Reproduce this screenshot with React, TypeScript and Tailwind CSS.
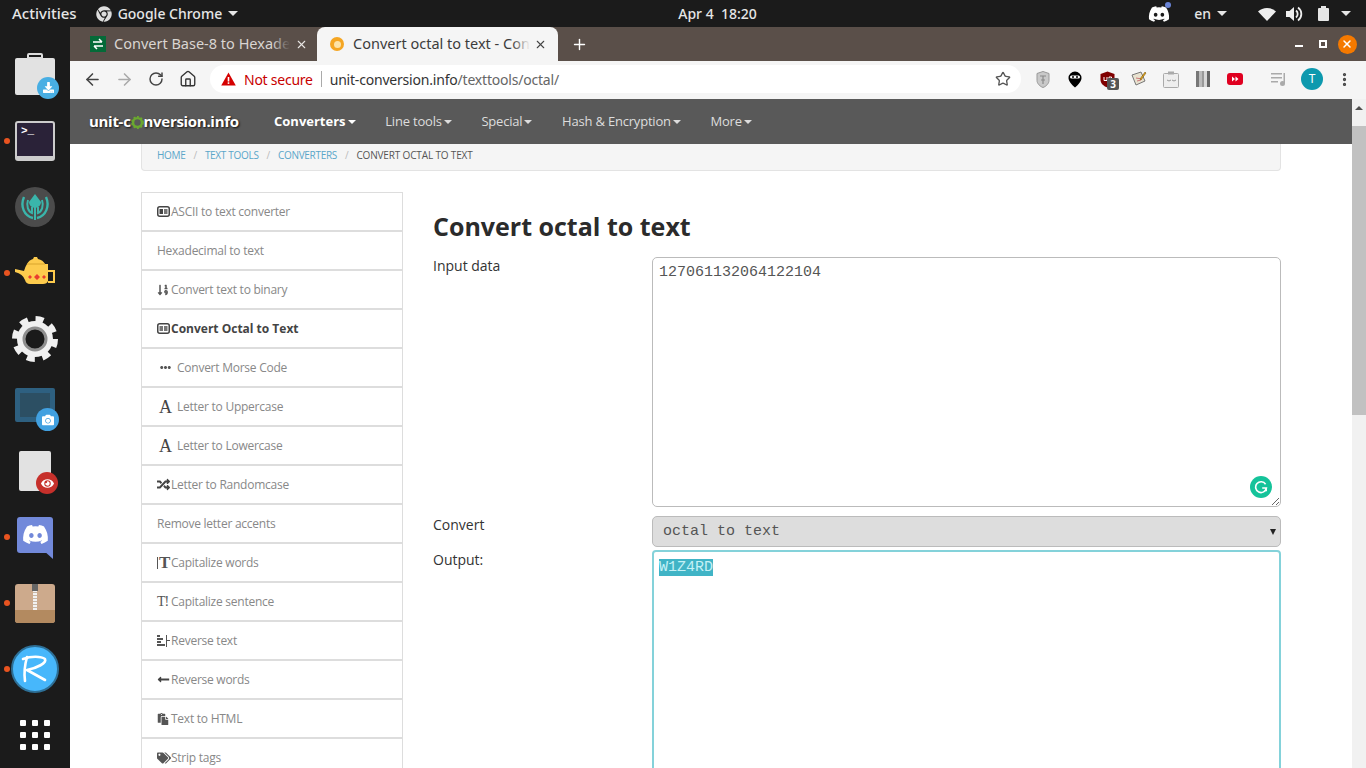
import type { ReactNode } from 'react';
import { ArrowLeft, ArrowRight, RotateCw, Home, Star, MoreVertical, Plus, X } from 'lucide-react';
import { FaChrome, FaDiscord, FaSortNumericDown, FaEllipsisH, FaRandom, FaLongArrowAltLeft, FaPaste, FaTags, FaDownload, FaCamera, FaEye } from 'react-icons/fa';

function CodeIcon({ label }: { label: string }) {
  return (
    <svg width="13" height="11" viewBox="0 0 13 11" className="shrink-0">
      <rect x="0.75" y="0.75" width="11.5" height="9.5" rx="2" fill="none" stroke="#444" strokeWidth="1.5" />
      <rect x="2.5" y="3" width="3.5" height="5" fill={label === 'a' ? '#444' : '#777'} />
      <rect x="7" y="3" width="3.5" height="5" fill="#777" />
    </svg>
  );
}

function SerifA() {
  return <span className="font-['Liberation_Serif',serif] text-[18px] leading-none text-[#444] ml-[2px]">A</span>;
}

function ReverseIcon() {
  return (
    <svg width="13" height="12" viewBox="0 0 13 12" className="shrink-0" fill="#555">
      <rect x="0" y="0" width="3" height="2" />
      <rect x="0" y="3" width="6" height="2" />
      <rect x="0" y="6" width="4" height="2" />
      <rect x="0" y="9" width="8" height="2" />
      <rect x="9" y="0" width="1" height="12" />
      <rect x="10" y="5" width="3" height="1" />
    </svg>
  );
}

const sideItems: { label: string; icon?: ReactNode; wide?: boolean; bold?: boolean }[] = [
  { label: 'ASCII to text converter', icon: <CodeIcon label="a" /> },
  { label: 'Hexadecimal to text' },
  { label: 'Convert text to binary', icon: <FaSortNumericDown size={12} color="#555" /> },
  { label: 'Convert Octal to Text', icon: <CodeIcon label="7" />, bold: true },
  { label: 'Convert Morse Code', icon: <FaEllipsisH size={11} color="#555" className="ml-[3px]" />, wide: true },
  { label: 'Letter to Uppercase', icon: <SerifA />, wide: true },
  { label: 'Letter to Lowercase', icon: <SerifA />, wide: true },
  { label: 'Letter to Randomcase', icon: <FaRandom size={13} color="#444" /> },
  { label: 'Remove letter accents' },
  {
    label: 'Capitalize words',
    icon: (
      <span className="flex items-center gap-[1px]">
        <span className="w-px h-[12px] bg-[#555]" />
        <span className="font-['Liberation_Serif',serif] text-[17px] leading-none font-bold text-[#555]">T</span>
      </span>
    ),
  },
  {
    label: 'Capitalize sentence',
    icon: <span className="font-['Liberation_Serif',serif] text-[14px] leading-none text-[#555] tracking-[-1px] whitespace-nowrap">T!</span>,
  },
  { label: 'Reverse text', icon: <ReverseIcon /> },
  { label: 'Reverse words', icon: <FaLongArrowAltLeft size={13} color="#444" /> },
  { label: 'Text to HTML', icon: <FaPaste size={12} color="#555" /> },
  { label: 'Strip tags', icon: <FaTags size={14} color="#555" /> },
];

function Sidebar() {
  return (
    <div className="w-[262px] shrink-0 flex flex-col">
      {sideItems.map((item) => (
        <div
          key={item.label}
          className={`h-[39px] shrink-0 border border-[#ddd] bg-white flex items-center pl-[15px] text-[12px] ${item.bold ? 'font-bold text-[#444]' : 'text-[#888] tracking-[-0.25px]'}`}
        >
          {item.icon && <span className={`flex items-center shrink-0 ${item.wide ? 'w-[20px]' : 'w-[14px]'}`}>{item.icon}</span>}
          <span>{item.label}</span>
        </div>
      ))}
    </div>
  );
}

function GearO() {
  return (
    <svg width="13" height="13" viewBox="0 0 13 13" className="inline-block align-[-2px]">
      <circle cx="6.5" cy="6.5" r="4.4" fill="none" stroke="#6aa82f" strokeWidth="2.4" />
      <circle cx="6.5" cy="6.5" r="5.6" fill="none" stroke="#6aa82f" strokeWidth="1.6" strokeDasharray="2 1.6" />
    </svg>
  );
}

function NavItem({ label, bold }: { label: string; bold?: boolean }) {
  return (
    <div className={`flex items-center pl-[15px] pr-[14.7px] text-[13px] ${bold ? 'font-bold text-white' : 'text-[#ddd] tracking-[-0.2px]'}`}>
      {label}
      <span className="ml-[2px] mt-[1px] border-x-[4px] border-t-[4px] border-x-transparent border-t-current" />
    </div>
  );
}

function Navbar() {
  return (
    <div className="h-[45px] shrink-0 bg-[#595959] flex items-center pl-[19px]">
      <div className="w-[170px] font-bold text-[15px] tracking-[-0.3px] text-white [text-shadow:1px_1px_2px_#111]">
        unit-c<GearO />nversion.info
      </div>
      <NavItem label="Converters" bold />
      <NavItem label="Line tools" />
      <NavItem label="Special" />
      <NavItem label="Hash & Encryption" />
      <NavItem label="More" />
    </div>
  );
}

function Breadcrumb() {
  return (
    <div className="h-[27px] pb-[4px] bg-[#f5f5f5] border border-t-0 border-[#e3e3e3] rounded-b-[4px] flex items-center pl-[15px] gap-[8px] text-[10px] tracking-[-0.3px]">
      <span className="text-[#5aa6c9]">HOME</span>
      <span className="text-[#bbb]">/</span>
      <span className="text-[#5aa6c9]">TEXT TOOLS</span>
      <span className="text-[#bbb]">/</span>
      <span className="text-[#5aa6c9]">CONVERTERS</span>
      <span className="text-[#bbb]">/</span>
      <span className="text-[#555] tracking-[-0.15px]">CONVERT OCTAL TO TEXT</span>
    </div>
  );
}

function GrammarlyBadge() {
  return (
    <div className="absolute right-[9px] bottom-[9px] w-[22px] h-[22px] rounded-full bg-[#15c39a] flex items-center justify-center">
      <svg width="14" height="14" viewBox="0 0 14 14" fill="none" stroke="#fff" strokeWidth="1.6">
        <path d="M11.6 4.2A5.4 5.4 0 1 0 12.4 8H8.2" />
        <path d="M12.2 8v3.2" />
      </svg>
    </div>
  );
}

function ConvertForm() {
  return (
    <div className="flex-1 min-w-0 pl-[30px]">
      <h1 className="h-[65px] pt-[16px] text-[25px] leading-[36px] font-bold text-[#2b2b2b]">Convert octal to text</h1>
      <div className="flex">
        <label className="w-[219px] shrink-0 text-[14px] leading-[18px] text-[#333]">Input data</label>
        <div className="flex-1 relative h-[250px]">
          <textarea
            readOnly
            defaultValue="127061132064122104"
            className="block w-full h-full border border-[#bbb] rounded-[5px] pl-[6px] pt-[6px] font-['Liberation_Mono',monospace] text-[15px] leading-[18px] text-[#555] outline-none resize-y"
          />
          <GrammarlyBadge />
        </div>
      </div>
      <div className="flex mt-[9px]">
        <label className="w-[219px] shrink-0 text-[14px] leading-[18px] text-[#333]">Convert</label>
        <div className="flex-1 relative">
          <select className="block w-full h-[31px] appearance-none border border-[#bbb] rounded-[5px] bg-[#ddd] pl-[10px] pt-[1px] font-['Liberation_Mono',monospace] text-[15px] text-[#555]">
            <option>octal to text</option>
          </select>
          <span className="absolute right-[5px] top-[13px] border-x-[3px] border-t-[6px] border-x-transparent border-t-[#222]" />
        </div>
      </div>
      <div className="flex mt-[3px]">
        <label className="w-[219px] shrink-0 text-[14px] leading-[18px] pt-px text-[#333]">Output:</label>
        <div className="flex-1 h-[250px] border-2 border-[#84d2da] rounded-[4px] pl-[5px] pt-[7px] font-['Liberation_Mono',monospace] text-[15px] leading-[18px] text-[#555]">
          <span className="bg-[#40b4c6] text-[#c4f1f6]">W1Z4RD</span>
        </div>
      </div>
    </div>
  );
}

function Scrollbar() {
  return (
    <div className="w-[14px] shrink-0 bg-[#f1f1f1] flex flex-col items-center">
      <div className="h-[17px] shrink-0 flex items-center justify-center">
        <span className="border-x-[4px] border-b-[4px] border-x-transparent border-b-[#505050]" />
      </div>
      <div className="w-full h-[289px] mt-[10px] bg-[#c1c1c1]" />
    </div>
  );
}

function Extensions() {
  return (
    <div className="flex items-center ml-[6px] shrink-0">
      <div className="w-[32px] flex justify-center">
        <svg width="14" height="17" viewBox="0 0 14 17"><path d="M1 2.5 7 .5l6 2v7c0 3-3 6-6 7-3-1-6-4-6-7z" fill="#c9c9c9" stroke="#999" /><path d="M4 5h6M5 9h4M7 5v8" stroke="#8a8a8a" strokeWidth="1.2" /></svg>
      </div>
      <div className="w-[32px] flex justify-center">
        <svg width="14" height="17" viewBox="0 0 14 17"><path d="M7 .5a6.5 6.5 0 0 1 6.5 6.5c0 3-3.5 7-6.5 9.5C4 14 .5 10 .5 7A6.5 6.5 0 0 1 7 .5z" fill="#000" /><rect x="2" y="4.5" width="10" height="3" rx="1.5" fill="#fff" /><circle cx="5" cy="6" r="1" /><circle cx="9" cy="6" r="1" /></svg>
      </div>
      <div className="w-[32px] flex justify-center relative">
        <svg width="15" height="17" viewBox="0 0 15 17"><path d="M7.5.5 14.5 3v6c0 3.500-3.500 6.500-7 7.500-3.500-1-7-4-7-7.500V3z" fill="#800000" /><path d="M4 6v3.500h3V6M9 9.500V6h2.500v3.500" stroke="#fff" fill="none" /></svg>
        <span className="absolute left-[16px] top-[7px] w-[12px] h-[12px] bg-[#555] rounded-[2px] text-white text-[10px] leading-[12px] font-bold text-center">3</span>
      </div>
      <div className="w-[32px] flex justify-center">
        <svg width="16" height="16" viewBox="0 0 16 16"><path d="M1 4 10 1l4 9-9 4z" fill="#e8e2d0" stroke="#777" /><path d="M5 7l6 1M6 10l4-1" stroke="#c77" /><path d="M9 8l5-7 1 1-5 7z" fill="#e2a21b" stroke="#6b4c00" strokeWidth=".5" /></svg>
      </div>
      <div className="w-[32px] flex justify-center">
        <svg width="16" height="17" viewBox="0 0 16 17"><rect x=".5" y="2.500" width="15" height="14" rx="1" fill="#eee" stroke="#aaa" /><rect x="5" y=".5" width="6" height="3" fill="#aaa" /><path d="M4 9l2 1 2-1M9 9l2 1 2-1" stroke="#999" fill="none" /></svg>
      </div>
      <div className="w-[32px] flex justify-center">
        <svg width="14" height="16" viewBox="0 0 14 16">
          <rect width="3" height="16" fill="#777" />
          <rect x="3" width="3" height="16" fill="#bbb" />
          <rect x="6" width="2" height="16" fill="#999" />
          <rect x="8" width="3" height="16" fill="#d8d8d8" />
          <rect x="11" width="3" height="16" fill="#666" />
        </svg>
      </div>
      <div className="w-[32px] flex justify-center">
        <svg width="16" height="12" viewBox="0 0 16 12"><rect width="16" height="12" rx="3" fill="#e00020" /><path d="M5 3.500 8 6 5 8.500zM8.500 3.500l3 2.500-3 2.500z" fill="#fff" /></svg>
      </div>
    </div>
  );
}

function ChromeFrame() {
  return (
    <div className="font-['Noto_Sans',sans-serif]">
      <div className="h-[34px] bg-[#5a4f49] flex items-end pl-[8px]">
        <div className="w-[239px] h-[34px] flex items-center pl-[12px] pr-[9px] text-[14.5px] text-[#d9d5d2]">
          <svg width="16" height="16" viewBox="0 0 16 16" className="shrink-0">
            <rect width="16" height="16" fill="#046a38" />
            <path d="M3 6h9M12 6 9 3M13 10H4M4 10l3 3" stroke="#fff" strokeWidth="1.5" fill="none" />
          </svg>
          <span className="relative ml-[8px] whitespace-nowrap">
            Convert Base-8 to Hexade
            <span className="absolute right-0 top-0 h-full w-[18px] bg-gradient-to-r from-transparent to-[#5a4f49]" />
          </span>
          <X size={13} className="ml-auto shrink-0" color="#e8e6e3" />
        </div>
        <div className="w-[241px] h-[34px] bg-[#f5f5f5] rounded-t-[8px] flex items-center pl-[13px] pr-[11px] text-[14.5px] text-[#3c3c3c]">
          <span className="w-[14px] h-[14px] rounded-full bg-[#f5a623] flex items-center justify-center shrink-0">
            <span className="w-[7px] h-[7px] rounded-full bg-[#fde3a7]" />
          </span>
          <span className="relative ml-[9px] whitespace-nowrap">
            Convert octal to text - Con
            <span className="absolute right-0 top-0 h-full w-[18px] bg-gradient-to-r from-transparent to-[#f5f5f5]" />
          </span>
          <X size={13} className="ml-auto shrink-0" color="#444" />
        </div>
        <div className="h-[34px] w-[42px] flex items-center justify-center">
          <Plus size={17} color="#fff" />
        </div>
        <div className="flex-1" />
        <div className="h-[34px] flex items-center">
          <div className="w-[24px] flex justify-center"><span className="w-[8px] h-[2px] mt-[4px] bg-white" /></div>
          <div className="w-[24px] flex justify-center"><span className="w-[8px] h-[8px] border-2 border-white" /></div>
          <div className="w-[24px] flex justify-center mr-[7px]">
            <span className="w-[19px] h-[19px] rounded-full bg-[#f57900] flex items-center justify-center"><X size={12} color="#fff" strokeWidth={3} /></span>
          </div>
        </div>
      </div>
      <div className="h-[38px] bg-[#f5f5f5] flex items-center pl-[6px] pb-[2px]">
        <div className="w-[32px] shrink-0 flex justify-center"><ArrowLeft size={19} color="#444" strokeWidth={2} /></div>
        <div className="w-[32px] shrink-0 flex justify-center"><ArrowRight size={19} color="#aaa" strokeWidth={2} /></div>
        <div className="w-[32px] shrink-0 flex justify-center"><RotateCw size={16} color="#444" strokeWidth={2.2} /></div>
        <div className="w-[32px] shrink-0 flex justify-center"><Home size={18} color="#333" strokeWidth={1.8} /></div>
        <div className="w-[811px] shrink-0 h-[28px] ml-[6px] bg-white rounded-full flex items-center pl-[11px] text-[14px]">
          <svg width="15" height="14" viewBox="0 0 15 14" className="shrink-0">
            <path d="M7.5 .5 14.800 13.500H.2z" fill="#d50000" />
            <rect x="6.700" y="5" width="1.600" height="4.500" fill="#fff" />
            <rect x="6.700" y="10.300" width="1.600" height="1.600" fill="#fff" />
          </svg>
          <span className="ml-[8px] text-[#c80000] tracking-[-0.25px]">Not secure</span>
          <span className="w-px h-[16px] bg-[#aaa] ml-[8px]" />
          <span className="ml-[8px] text-[#333] tracking-[-0.2px]">unit-conversion.info<span className="text-[#666]">/texttools/octal/</span></span>
          <Star size={16} color="#555" className="ml-auto mr-[10px]" />
        </div>
        <Extensions />
        <div className="w-[44px] shrink-0 ml-[6px] flex justify-center">
          <svg width="17" height="15" viewBox="0 0 17 15" fill="#aaa"><rect y="1" width="11" height="1.500" /><rect y="5" width="11" height="1.500" /><rect y="9" width="7" height="1.500" /><rect x="12.500" y="1" width="1.500" height="10" /><circle cx="11.500" cy="11.500" r="2.500" /></svg>
        </div>
        <div className="w-[22px] h-[22px] shrink-0 rounded-full bg-[#0d99ae] text-white text-[12px] flex items-center justify-center">T</div>
        <div className="w-[43px] shrink-0 flex justify-center"><MoreVertical size={17} color="#444" strokeWidth={2.6} /></div>
      </div>
    </div>
  );
}

function TopBar() {
  return (
    <div className="h-[27px] shrink-0 bg-[#1b1b1b] flex items-center text-[14px] text-[#e6e6e6] font-['Noto_Sans',sans-serif] font-medium">
      <span className="ml-[12px] text-[15px]">Activities</span>
      <FaChrome size={16} color="#ddd" className="ml-[19px]" />
      <span className="ml-[6px]">Google Chrome</span>
      <span className="ml-[6px] border-x-[5px] border-t-[5px] border-x-transparent border-t-[#e6e6e6]" />
      <span className="ml-[440px]">Apr 4&nbsp; 18:20</span>
      <div className="ml-auto flex items-center">
        <span className="relative flex">
          <FaDiscord size={22} color="#fff" />
          <span className="absolute -right-[1px] -top-[1px] w-[6px] h-[6px] rounded-full bg-[#6a84d6]" />
        </span>
        <span className="ml-[24px]">en</span>
        <span className="ml-[6px] border-x-[5px] border-t-[5px] border-x-transparent border-t-[#e6e6e6]" />
        <svg width="18" height="14" viewBox="0 0 18 14" className="ml-[31px]" fill="#eee">
          <path d="M0 4.500A13 13 0 0 1 18 4.500L9 14z" />
        </svg>
        <svg width="18" height="16" viewBox="0 0 18 16" className="ml-[10px]" fill="#eee">
          <path d="M0 5h3.500L8 1v14l-4.500-4H0z" />
          <path d="M10 4.500a4.500 4.500 0 0 1 0 7M12 1.500a8 8 0 0 1 0 13" fill="none" stroke="#eee" strokeWidth="1.800" />
        </svg>
        <svg width="11" height="15" viewBox="0 0 11 15" className="ml-[14px]" fill="#e6e6e6"><rect x="3" width="5" height="2" /><rect y="2" width="11" height="13" rx="1" /></svg>
        <span className="ml-[12px] mr-[15px] border-x-[5px] border-t-[5px] border-x-transparent border-t-[#e6e6e6]" />
      </div>
    </div>
  );
}

function DockCell({ children, running }: { children: ReactNode; running?: boolean }) {
  return (
    <div className="h-[66px] shrink-0 relative flex items-center justify-center">
      {running && <span className="absolute left-[4px] top-[30px] w-[6px] h-[6px] rounded-full bg-[#e95420]" />}
      {children}
    </div>
  );
}

function Dock() {
  return (
    <div className="w-[70px] shrink-0 bg-[#1b1b1b] flex flex-col pt-[15px] overflow-hidden">
      <DockCell>
        <div className="relative w-[40px] h-[37px]">
          <div className="absolute left-[12px] -top-[4px] w-[16px] h-[6px] border-2 border-[#ddd] rounded-t-[2px]" />
          <div className="w-full h-full mt-[1px] bg-[#e2e2e2] rounded-[2px]" />
          <div className="absolute -right-[4px] -bottom-[5px] w-[22px] h-[22px] rounded-full bg-[#48aee3] flex items-center justify-center"><FaDownload size={11} color="#fff" /></div>
        </div>
      </DockCell>
      <DockCell running>
        <div className="w-[40px] h-[40px] rounded-[3px] border-2 border-[#ccc] border-b-[5px] bg-[#2a2238] pl-[4px] text-white font-['Liberation_Mono',monospace] text-[11px] leading-[16px] font-bold">&gt;_</div>
      </DockCell>
      <DockCell>
        <div className="w-[40px] h-[40px] rounded-full bg-[#4b4b4b] flex items-center justify-center">
          <svg width="30" height="30" viewBox="0 0 30 30" fill="none" stroke="#3ab5ab" strokeWidth="2">
            <path d="M15 2 L21 10 Q21 15 15 16 Q9 15 9 10Z" fill="#3ab5ab" stroke="none" />
            <path d="M4 5C0 14 4 24 13 26" strokeWidth="2.400" />
            <path d="M26 5C30 14 26 24 17 26" strokeWidth="2.400" />
            <path d="M8 8C6 14 8 20 13 21.500M22 8C24 14 22 20 17 21.500" />
            <path d="M15 15v13M12 15v5M18 15v5" />
          </svg>
        </div>
      </DockCell>
      <DockCell running>
        <svg width="40" height="27" viewBox="0 0 40 27" fill="#fdcb4d" className="mb-[6px]">
          <path d="M12 7Q14 3 18 2L19 0H22L23 2Q28 3 30 7H33V24Q32 27 28 27H15Q11 27 10 23Q8 17 0 15V12L9 14Q10 10 12 7Z" />
          <path d="M33 13H40V26H33V24H38V15H33Z" />
          <path d="M12 7H30" stroke="#d9a52e" />
          <path d="M15 18l2 2-2 2-2-2zM22 17l3 3-3 3-3-3zM29 18l2 2-2 2-2-2z" fill="#ea3d2f" />
        </svg>
      </DockCell>
      <DockCell>
        <svg width="46" height="46" viewBox="0 0 46 46">
          <circle cx="23" cy="23" r="18" fill="#f0f0f0" />
          <circle cx="23" cy="23" r="20" fill="none" stroke="#f0f0f0" strokeWidth="6" strokeDasharray="8 7.700" />
          <circle cx="23" cy="23" r="11" fill="#1a1a1a" stroke="#8e8e8e" strokeWidth="3" />
        </svg>
      </DockCell>
      <DockCell>
        <div className="relative w-[40px] h-[34px]">
          <div className="w-full h-full rounded-[2px] bg-[#2c4f63] border-[5px] border-[#2e6080]" />
          <div className="absolute -right-[4px] -bottom-[9px] w-[23px] h-[23px] rounded-full bg-[#41a0e0] flex items-center justify-center"><FaCamera size={12} color="#fff" /></div>
        </div>
      </DockCell>
      <DockCell>
        <div className="relative w-[32px] h-[40px]">
          <div className="w-full h-full rounded-[2px] bg-[#e2e2e2]" />
          <div className="absolute -right-[7px] -bottom-[3px] w-[22px] h-[22px] rounded-full bg-[#c6302b] flex items-center justify-center"><FaEye size={13} color="#fff" /></div>
        </div>
      </DockCell>
      <DockCell running>
        <div className="relative w-[36px] h-[36px] mb-[5px] rounded-[3px] bg-[#7289da] flex items-center justify-center">
          <FaDiscord size={27} color="#fff" />
          <svg width="10" height="9" viewBox="0 0 10 9" className="absolute right-0 -bottom-[6px]"><path d="M0 0h10v9z" fill="#7289da" /></svg>
        </div>
      </DockCell>
      <DockCell running>
        <div className="relative w-[40px] h-[39px] rounded-[3px] bg-[#cdaa8c] overflow-hidden flex flex-col">
          <div className="h-[26px] shrink-0" />
          <div className="flex-1 bg-[#b38a60]" />
          <div className="absolute left-[17px] top-0 w-[6px] h-[7px] bg-[#666]" />
          <div className="absolute left-[18px] top-[7px] w-[4px] h-[19px] bg-[repeating-linear-gradient(0deg,#f2f2f2_0,#f2f2f2_2px,#c9b7a4_2px,#c9b7a4_3px)]" />
        </div>
      </DockCell>
      <DockCell running>
        <div className="w-[48px] h-[48px] rounded-full bg-[#47b7fb] border-2 border-[#2d6f96] flex items-center justify-center">
          <svg width="30" height="30" viewBox="0 0 30 30" fill="none" stroke="#fff" strokeWidth="2.600" strokeLinecap="round" strokeLinejoin="round">
            <path d="M3 5c8-3 18-3 22 0 2 4-8 9-18 11l18 10" />
            <path d="M7 3C5 10 4 20 5 27" />
          </svg>
        </div>
      </DockCell>
      <DockCell>
        <div className="grid grid-cols-3 gap-[6px]">
          {Array.from({ length: 9 }).map((_, i) => (
            <span key={i} className="w-[6px] h-[6px] bg-white rounded-[1px]" />
          ))}
        </div>
      </DockCell>
    </div>
  );
}

export default function App() {
  return (
    <div className="h-screen overflow-hidden flex flex-col bg-white font-['Open_Sans',sans-serif]">
      <TopBar />
      <div className="flex-1 min-h-0 flex">
        <Dock />
        <div className="flex-1 min-w-0 flex flex-col">
          <ChromeFrame />
          <div className="flex-1 min-h-0 flex">
            <div className="flex-1 min-w-0 overflow-hidden">
              <Navbar />
              <div className="pl-[71px] pr-[71px]">
                <Breadcrumb />
                <div className="flex mt-[21px]">
                  <Sidebar />
                  <ConvertForm />
                </div>
              </div>
            </div>
            <Scrollbar />
          </div>
        </div>
      </div>
    </div>
  );
}
